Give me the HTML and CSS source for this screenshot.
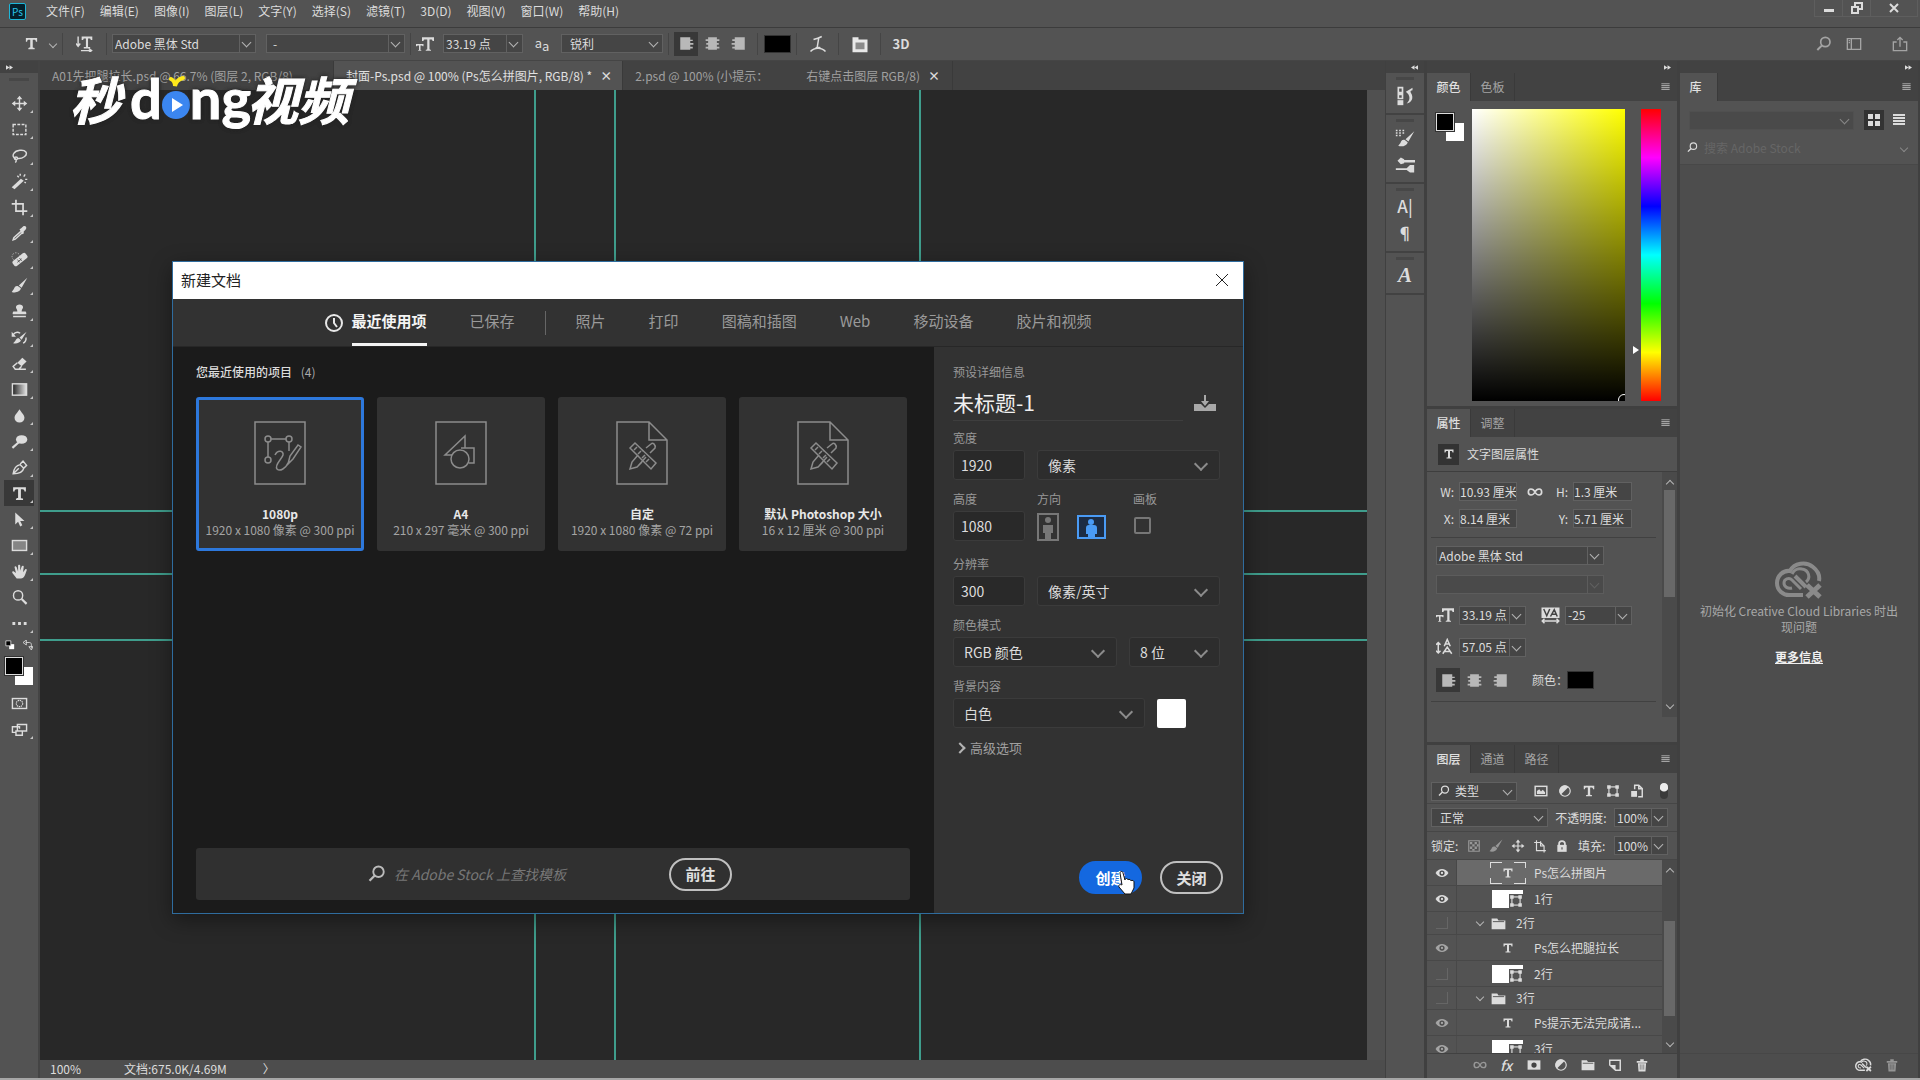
FILE: index.html
```html
<!DOCTYPE html>
<html lang="zh-CN">
<head>
    <meta charset="UTF-8">
    <meta name="viewport" content="width=device-width, initial-scale=1.0">
    <title>Photoshop</title>
    <link rel="stylesheet" href="styles.css">
</head>
<body>

    <!-- shared icons -->
    <svg class="sprite" aria-hidden="true">
        <symbol id="i-move" viewBox="0 0 24 24"><path d="M12 1l4 5h-3v5h5V8l5 4-5 4v-3h-5v5h3l-4 5-4-5h3v-5H6v3l-5-4 5-4v3h5V6H8z" fill="currentColor"/></symbol>
        <symbol id="i-marquee" viewBox="0 0 24 24"><rect x="3" y="5" width="18" height="14" fill="none" stroke="currentColor" stroke-width="2" stroke-dasharray="4 2"/></symbol>
        <symbol id="i-lasso" viewBox="0 0 24 24"><path d="M7 17c-4-2-5-5-3-8 3-5 14-6 17-2 3 5-5 10-12 9M7 14c3 0 3 4 0 4s-3-4 0-4zm0 4c1 2 0 3-1 4" fill="none" stroke="currentColor" stroke-width="2"/></symbol>
        <symbol id="i-wand" viewBox="0 0 24 24"><path d="M1 20L14 8l4 3L5 23z" fill="currentColor"/><path d="M13 1v3M20 2l-2 3M23 9h-3M21 14l-2-1M9 4l2 2" stroke="currentColor" stroke-width="2"/></symbol>
        <symbol id="i-crop" viewBox="0 0 24 24"><path d="M7 1v16h16M1 7h16v16" fill="none" stroke="currentColor" stroke-width="2.4"/></symbol>
        <symbol id="i-dropper" viewBox="0 0 24 24"><path d="M14 9L4 18l-1 3 3-1 10-9" fill="none" stroke="currentColor" stroke-width="2"/><path d="M12 6l2-1 3-3c3-2 6 1 4 4l-3 3v3l-2 1z" fill="currentColor"/></symbol>
        <symbol id="i-heal" viewBox="0 0 24 24"><rect x="1" y="8" width="23" height="9" rx="3" fill="currentColor" transform="rotate(-38 12 12)"/><path d="M9 12l3 4M12 10l3 4M9 16l6-5" stroke="#535353" stroke-width="1.3"/><circle cx="7" cy="8" r="5.5" fill="none" stroke="currentColor" stroke-dasharray="2 2"/></symbol>
        <symbol id="i-brush" viewBox="0 0 24 24"><path d="M23 1L11 12l4 3zM10 13c-4-1-5 2-6 4l-3 4c5 2 12 0 13-5z" fill="currentColor"/></symbol>
        <symbol id="i-stamp" viewBox="0 0 24 24"><path d="M9 12c0-3-2-4-2-6 0-5 10-5 10 0 0 2-2 3-2 6h5c2 0 2 4 1 4H3c-1 0-1-4 1-4zM3 18h18v2H3z" fill="currentColor"/></symbol>
        <symbol id="i-history" viewBox="0 0 24 24"><path d="M22 4L12 12l3 3zM11 13c-4 0-4 3-6 5l-2 2c4 1 10 0 11-4z" fill="currentColor"/><path d="M3 8c3-4 7-4 10-2M21 12c1 3-1 7-4 8" fill="none" stroke="currentColor" stroke-width="2"/><path d="M1 4v7h6z" fill="currentColor"/></symbol>
        <symbol id="i-eraser" viewBox="0 0 24 24"><path d="M9 11l7-7 6 5-7 7z" fill="currentColor"/><path d="M9 11l-6 5 3 4h5l4-4M6 20h15" fill="none" stroke="currentColor" stroke-width="2"/></symbol>
        <symbol id="i-gradient" viewBox="0 0 24 24"><linearGradient id="lg"><stop stop-color="#222"/><stop offset="1" stop-color="#e4e4e4"/></linearGradient><rect x="2" y="4" width="20" height="16" fill="url(#lg)" stroke="currentColor" stroke-width="2"/></symbol>
        <symbol id="i-drop" viewBox="0 0 24 24"><path d="M12 3c2 4 7 8 7 12a7 7 0 0 1-14 0c0-4 5-8 7-12z" fill="currentColor"/></symbol>
        <symbol id="i-dodge" viewBox="0 0 24 24"><ellipse cx="15" cy="9" rx="8" ry="6" fill="currentColor"/><path d="M11 13l-9 8" stroke="currentColor" stroke-width="3"/></symbol>
        <symbol id="i-pen" viewBox="0 0 24 24"><path d="M3 21c1-7 4-12 10-13l5 5c-1 5-6 8-15 8zM4 20l7-7M13 7l4-4 5 6-4 4" fill="none" stroke="currentColor" stroke-width="2"/></symbol>
        <symbol id="i-type" viewBox="0 0 24 24"><path d="M3 3h18v6h-2c0-2-1-3-3-3h-2v12c0 1 1 1 3 1v2H7v-2c2 0 3 0 3-1V6H8C6 6 5 7 5 9H3z" fill="currentColor"/></symbol>
        <symbol id="i-arrow" viewBox="0 0 24 24"><path d="M6 2v17l4-4 3 7 3-2-3-6h6z" fill="currentColor"/></symbol>
        <symbol id="i-rect" viewBox="0 0 24 24"><rect x="2" y="5" width="20" height="14" fill="#858585" stroke="currentColor" stroke-width="2"/></symbol>
        <symbol id="i-hand" viewBox="0 0 24 24"><path d="M8 22l-6-8c-1-2 1-3 2-2l3 2L5 6c0-2 2-2 3 0l2 6V4c0-2 3-2 3 0v7l2-6c1-2 3-1 3 0l-1 8 3-4c1-1 3 0 2 2-2 5-3 11-8 11z" fill="currentColor"/></symbol>
        <symbol id="i-zoom" viewBox="0 0 24 24"><circle cx="10" cy="9" r="6.5" fill="none" stroke="currentColor" stroke-width="2"/><path d="M15 14l7 7" stroke="currentColor" stroke-width="3"/></symbol>
        <symbol id="i-search" viewBox="0 0 24 24"><circle cx="14" cy="9" r="7" fill="none" stroke="currentColor" stroke-width="2.5"/><path d="M9 14l-7 7" stroke="currentColor" stroke-width="3"/></symbol>
        <symbol id="i-dots" viewBox="0 0 24 24"><path d="M2 10h4v4H2zM10 10h4v4h-4zM18 10h4v4h-4z" fill="currentColor"/></symbol>
        <symbol id="i-mask" viewBox="0 0 24 24"><rect x="2" y="5" width="20" height="14" fill="none" stroke="currentColor" stroke-width="2"/><circle cx="12" cy="12" r="4.5" fill="none" stroke="currentColor" stroke-width="1.6" stroke-dasharray="2 1"/></symbol>
        <symbol id="i-screen" viewBox="0 0 24 24"><path d="M8 16H2V8h10v3M9 5h13v9H9zM7 14h9v6H7z" fill="none" stroke="currentColor" stroke-width="2"/></symbol>
        <symbol id="i-left" viewBox="0 0 24 24"><path d="M2 2h16v4h4v2h-4v3h5v3h-5v3h4v3h-4v2H2z" fill="currentColor"/></symbol>
        <symbol id="i-center" viewBox="0 0 24 24"><path d="M5 2h14v3h4v3h-4v3h3v3h-3v3h4v3h-4v2H5v-2H1v-3h4v-3H2v-3h3V8H1V5h4z" fill="currentColor"/></symbol>
        <symbol id="i-right" viewBox="0 0 24 24"><path d="M6 2h16v20H6v-2H2v-3h4v-3H1v-3h5V8H2V5h4z" fill="currentColor"/></symbol>
        <symbol id="i-size" viewBox="0 0 24 24"><path d="M8 3h16v5h-2c0-2-1-2-2-2h-2v13l2 1v1h-7v-1l2-1V6h-3c-1 0-2 0-2 2H8zM0 12h10v3H9l-1-1H6v6h1v1H3v-1h1v-6H2l-1 1H0z" fill="currentColor"/></symbol>
        <symbol id="i-leading" viewBox="0 0 24 24"><path d="M11 11l4-9 4 9M12 8h6M9 21l6-9 6 9M11 18h8M3 6v13M0 9l3-3 3 3M0 17l3 3 3-3" fill="none" stroke="currentColor" stroke-width="2"/></symbol>
        <symbol id="i-tracking" viewBox="0 0 24 24"><rect y="2" width="24" height="14" fill="currentColor"/><path d="M3 4l4 9 4-9M12 14l5-9 4 9M13 11h7" fill="none" stroke="#444" stroke-width="2"/><path d="M1 20h22M4 17l-3 3 3 3M20 17l3 3-3 3" fill="none" stroke="currentColor" stroke-width="2"/></symbol>
        <symbol id="i-link" viewBox="0 0 24 24"><path d="M12 12c-3-6-10-6-10 0s7 6 10 0 10-6 10 0-7 6-10 0z" fill="none" stroke="currentColor" stroke-width="2.5"/></symbol>
        <symbol id="i-image" viewBox="0 0 24 24"><rect x="2" y="4" width="20" height="16" fill="none" stroke="currentColor" stroke-width="2.5"/><path d="M5 17v-5l4-3 3 4 3-3 4 4v3z" fill="currentColor"/></symbol>
        <symbol id="i-adjust" viewBox="0 0 24 24"><circle cx="12" cy="12" r="9" fill="none" stroke="currentColor" stroke-width="2"/><path d="M18 5A9 9 0 0 0 5 18z" fill="currentColor"/></symbol>
        <symbol id="i-shape" viewBox="0 0 24 24"><rect x="5" y="5" width="14" height="14" fill="none" stroke="currentColor" stroke-width="2"/><path d="M2 2h6v6H2zM16 2h6v6h-6zM2 16h6v6H2zM16 16h6v6h-6z" fill="currentColor"/></symbol>
        <symbol id="i-smart" viewBox="0 0 24 24"><path d="M8 9V2h7l6 6v14h-7M15 2v6h6" fill="none" stroke="currentColor" stroke-width="2.5"/><path d="M2 12h10v10H2z" fill="currentColor"/></symbol>
        <symbol id="i-pixels" viewBox="0 0 24 24"><path d="M3 3h18v18H3z" fill="none" stroke="currentColor" stroke-width="2"/><path d="M5 5h4v4H5zM13 5h4v4h-4zM9 9h4v4H9zM17 9h3v4h-3zM5 13h4v4H5zM13 13h4v4h-4zM9 17h4v3H9z" fill="currentColor"/></symbol>
        <symbol id="i-artboard" viewBox="0 0 24 24"><path d="M6 2v18h16M2 6h11l6 6v11M13 4v8h7" fill="none" stroke="currentColor" stroke-width="2"/></symbol>
        <symbol id="i-lock" viewBox="0 0 24 24"><path d="M4 10h16v12H4z" fill="currentColor"/><path d="M7 11V8c0-6 10-6 10 0v3" fill="none" stroke="currentColor" stroke-width="3"/><path d="M12 14v4" stroke="#535353" stroke-width="2"/></symbol>
        <symbol id="i-eye" viewBox="0 0 24 24"><path d="M1 12c5-9 17-9 22 0-5 9-17 9-22 0z" fill="currentColor"/><circle cx="12" cy="12" r="4.5" fill="#4a4a4a"/><circle cx="12" cy="12" r="2" fill="currentColor"/></symbol>
        <symbol id="i-folder" viewBox="0 0 24 24"><path d="M1 4h9l2 3h11v14H1z" fill="currentColor"/><path d="M3 9h18" stroke="#535353" stroke-width="1.5"/></symbol>
        <symbol id="i-addmask" viewBox="0 0 24 24"><path d="M1 4h22v16H1z" fill="currentColor"/><circle cx="12" cy="12" r="4.5" fill="#444"/></symbol>
        <symbol id="i-new" viewBox="0 0 24 24"><path d="M3 4h18v17h-8l-10-9z" fill="none" stroke="currentColor" stroke-width="2.5"/><path d="M3 12h10v9z" fill="currentColor"/></symbol>
        <symbol id="i-trash" viewBox="0 0 24 24"><path d="M3 5h18v3H3zM9 2h6v3H9zM5 9h14l-1 14H6z" fill="currentColor"/><path d="M9 11v9M12 11v9M15 11v9" stroke="#535353"/></symbol>
        <symbol id="i-menu" viewBox="0 0 24 24"><path d="M1 3h22v3H1zM1 8h22v3H1zM1 13h22v3H1zM1 18h22v3H1z" fill="currentColor"/></symbol>
        <symbol id="i-cloud" viewBox="0 0 48 38"><g fill="none" stroke="currentColor"><path d="M26 28l-9-9c-3-3-8-1-8 3s4 6 8 5M17 13c2-4 6-6 10-5 7 1 9 9 4 13" stroke-width="3"/><path d="M16 34c-8 1-14-5-14-12S8 9 15 10C19 2 31 0 38 6c5 4 7 9 6 14M14 34h14M20 15l11 11" stroke-width="4"/><path d="M32 24l13 12M45 24L32 36" stroke-width="5"/></g></symbol>
        <symbol id="i-tools-doc" viewBox="0 0 52 64"><g fill="none" stroke="#8c8c8c" stroke-width="1.5"><path d="M1 1h32l18 18v44H1zM33 1v18h18"/><path d="M14 27l5-5 21 20-5 6zM18 29l3-3M22 33l3-3M26 37l3-3M30 41l3-3"/><path d="M30 27l5-4c2-2 5 1 4 4l-5 5M30 36l-8 9M27 29l-1 1M22 34l-6 7-2 7 7-2 5-5"/></g></symbol>
        <symbol id="i-forward" viewBox="0 0 12 8"><path d="M0 0l6 4-6 4zM6 0l6 4-6 4z" fill="currentColor"/></symbol>
    </svg>

    <header class="menubar">
        <span class="ps-logo">Ps</span>
        <nav class="menu">
            <a href="#">文件(F)</a>
            <a href="#">编辑(E)</a>
            <a href="#">图像(I)</a>
            <a href="#">图层(L)</a>
            <a href="#">文字(Y)</a>
            <a href="#">选择(S)</a>
            <a href="#">滤镜(T)</a>
            <a href="#">3D(D)</a>
            <a href="#">视图(V)</a>
            <a href="#">窗口(W)</a>
            <a href="#">帮助(H)</a>
        </nav>
        <div class="window-controls">
            <button aria-label="最小化"><svg viewBox="0 0 12 12"><path d="M1 7h10v3H1z" fill="currentColor"/></svg></button>
            <button aria-label="还原"><svg viewBox="0 0 12 12"><path d="M4 4V1h7v6H7M1 5h6v6H1z" fill="none" stroke="currentColor" stroke-width="2"/></svg></button>
            <button aria-label="关闭窗口"><svg viewBox="0 0 12 12"><path d="M2 2l8 8M10 2l-8 8" stroke="currentColor" stroke-width="2"/></svg></button>
        </div>
    </header>

    <div class="options">
        <button class="opt-tool" aria-label="文字工具"><svg><use href="#i-type"/></svg><i class="chev"></i></button>
        <span class="sep"></span>
        <button class="opt-orient" aria-label="切换文本取向"><svg viewBox="0 0 24 24"><path d="M8 2h15v5h-2l-1-2h-3v12h3v2h-9v-2h3V5h-3l-1 2H8z" fill="currentColor"/><path d="M3 2v13M0 12l3 4 3-4M7 22h14M18 19l4 3-4 3" fill="none" stroke="currentColor" stroke-width="2"/></svg></button>
        <span class="sep"></span>
        <span class="select split opt-font"><select aria-label="字体"><option>Adobe 黑体 Std</option></select></span>
        <span class="select split opt-style"><select aria-label="字体样式"><option>-</option></select></span>
        <span class="sep"></span>
        <svg class="ico18"><use href="#i-size"/></svg>
        <span class="select split opt-size"><select aria-label="字号"><option>33.19 点</option></select></span>
        <span class="aa">a<sub>a</sub></span>
        <span class="select opt-alias"><select aria-label="消除锯齿"><option>锐利</option></select></span>
        <span class="sep"></span>
        <div class="align">
            <button class="on" aria-label="左对齐"><svg><use href="#i-left"/></svg></button>
            <button aria-label="居中对齐"><svg><use href="#i-center"/></svg></button>
            <button aria-label="右对齐"><svg><use href="#i-right"/></svg></button>
        </div>
        <span class="sep wide-sep"></span>
        <button class="swatch-black" aria-label="文本颜色"></button>
        <span class="sep"></span>
        <button class="opt-btn" aria-label="文字变形"><svg viewBox="0 0 24 24"><path d="M6 6c4-1 7-2 11-4M13 4l-2 12M9 17c2-1 4-1 6 0M2 22c5-6 15-6 20 0" fill="none" stroke="currentColor" stroke-width="2"/></svg></button>
        <span class="sep"></span>
        <button class="opt-btn" aria-label="字符面板"><svg viewBox="0 0 24 24"><path d="M2 3h8v3h12v17H2z" fill="#e8e8e8"/><path d="M6 10h12v9H6z" fill="#8a8a8a"/></svg></button>
        <span class="sep"></span>
        <button class="opt-3d">3D</button>
        <div class="options-right">
            <button aria-label="搜索"><svg><use href="#i-search"/></svg></button>
            <button aria-label="工作区"><svg viewBox="0 0 24 24"><path d="M2 4h20v16H2zM8 4v16M4 7h2M4 10h2" fill="none" stroke="currentColor" stroke-width="2"/></svg></button>
            <button aria-label="共享"><svg viewBox="0 0 24 24"><path d="M7 9H2v13h20V9h-5M12 16V2M8 6l4-4 4 4" fill="none" stroke="currentColor" stroke-width="2"/></svg></button>
        </div>
    </div>

    <div class="workspace">
        <aside class="tools">
            <div class="strip strip-left"><svg><use href="#i-forward"/></svg></div>
            <div class="grip"></div>
            <button aria-label="移动"><svg><use href="#i-move"/></svg></button>
            <button aria-label="选框"><svg><use href="#i-marquee"/></svg></button>
            <button aria-label="套索"><svg><use href="#i-lasso"/></svg></button>
            <button aria-label="魔棒"><svg><use href="#i-wand"/></svg></button>
            <button aria-label="裁剪"><svg><use href="#i-crop"/></svg></button>
            <button aria-label="吸管"><svg><use href="#i-dropper"/></svg></button>
            <button aria-label="修复"><svg><use href="#i-heal"/></svg></button>
            <button aria-label="画笔"><svg><use href="#i-brush"/></svg></button>
            <button aria-label="图章"><svg><use href="#i-stamp"/></svg></button>
            <button aria-label="历史记录画笔"><svg><use href="#i-history"/></svg></button>
            <button aria-label="橡皮擦"><svg><use href="#i-eraser"/></svg></button>
            <button aria-label="渐变"><svg><use href="#i-gradient"/></svg></button>
            <button aria-label="模糊"><svg><use href="#i-drop"/></svg></button>
            <button aria-label="减淡"><svg><use href="#i-dodge"/></svg></button>
            <button aria-label="钢笔"><svg><use href="#i-pen"/></svg></button>
            <button class="on" aria-label="文字"><svg><use href="#i-type"/></svg></button>
            <button aria-label="路径选择"><svg><use href="#i-arrow"/></svg></button>
            <button aria-label="矩形"><svg><use href="#i-rect"/></svg></button>
            <button aria-label="抓手"><svg><use href="#i-hand"/></svg></button>
            <button class="no-sub" aria-label="缩放"><svg><use href="#i-zoom"/></svg></button>
            <button aria-label="编辑工具栏"><svg><use href="#i-dots"/></svg></button>
            <div class="color-mini">
                <svg viewBox="0 0 12 12"><path d="M5 5h6v6H5z" fill="#fff"/><path d="M1 1h6v6H1z" fill="#000" stroke="#ddd"/></svg>
                <svg viewBox="0 0 12 12"><path d="M3 3h5c1 0 2 1 2 2v5M4 0L0 3l4 3zM7 8l3 4 2-4z" fill="none" stroke="#ddd"/></svg>
            </div>
            <div class="fgbg"><span class="bg"></span><span class="fg"></span></div>
            <button class="no-sub" aria-label="快速蒙版"><svg><use href="#i-mask"/></svg></button>
            <button aria-label="屏幕模式"><svg><use href="#i-screen"/></svg></button>
        </aside>

        <main class="document">
            <div class="doc-tabs">
                <a href="#" class="doc-tab tab-a">A01先把腿拉长.psd @ 66.7% (图层 2, RGB/8)</a>
                <a href="#" class="doc-tab active">封面-Ps.psd @ 100% (Ps怎么拼图片, RGB/8) * <b>×</b></a>
                <a href="#" class="doc-tab"><span>2.psd @ 100% (小提示：</span><span class="tab-gap">右键点击图层 RGB/8)</span> <b>×</b></a>
            </div>
            <div class="doc-body">
                <div class="canvas">
                    <span class="guide v g1"></span>
                    <span class="guide v g2"></span>
                    <span class="guide v g3"></span>
                    <span class="guide h g4"></span>
                    <span class="guide h g5"></span>
                    <span class="guide h g6"></span>
                </div>
                <div class="gutter"></div>
            </div>
            <footer class="status">
                <span class="status-zoom">100%</span>
                <span>文档:675.0K/4.69M</span>
                <span class="status-arrow">〉</span>
            </footer>
        </main>

        <aside class="dock">
            <div class="strip"><svg class="flip"><use href="#i-forward"/></svg></div>
            <div class="dock-group">
                <button aria-label="历史记录"><svg viewBox="0 0 24 24"><path d="M4 2h5v6H4zM4 10h5v5H4z" fill="none" stroke="currentColor" stroke-width="2"/><path d="M3 17h7v6H3z" fill="currentColor"/><path d="M13 7l8-5v3c-2 0-3 1-2 3 4 6 1 12-5 13 4-4 4-7 2-11z" fill="currentColor"/></svg></button>
            </div>
            <div class="dock-group">
                <button aria-label="画笔设置"><svg viewBox="0 0 24 24"><use href="#i-brush" x="3" y="3" width="21" height="21"/><path d="M2 2v9M6 2v9M10 2v6" stroke="currentColor" stroke-width="2" stroke-dasharray="2 1"/></svg></button>
                <button aria-label="画笔"><svg viewBox="0 0 24 24"><path d="M0 7h3l4-4 4 2v1h13v3H11v1l-4 1-4-4zM1 16h13l4-4h5v9h-5l-4-3H1z" fill="currentColor"/></svg></button>
            </div>
            <div class="dock-group">
                <button class="glyph" aria-label="字符">A|</button>
                <button class="glyph" aria-label="段落">¶</button>
            </div>
            <div class="dock-group">
                <button class="glyph script" aria-label="字形">A</button>
            </div>
        </aside>

        <aside class="panels">
            <div class="strip"><svg><use href="#i-forward"/></svg></div>
            <section class="panel color-panel">
                <div class="tabs">
                    <button class="tab active">颜色</button>
                    <button class="tab">色板</button>
                    <svg class="burger"><use href="#i-menu"/></svg>
                </div>
                <div class="color-body">
                    <div class="fgbg"><span class="bg"></span><span class="fg"></span></div>
                    <div class="field"><span class="field-mark"></span></div>
                    <div class="hue"><span class="hue-mark"></span></div>
                </div>
            </section>

            <section class="panel props">
                <div class="tabs">
                    <button class="tab active">属性</button>
                    <button class="tab">调整</button>
                    <svg class="burger"><use href="#i-menu"/></svg>
                </div>
                <div class="props-title"><span class="type-box"><svg><use href="#i-type"/></svg></span>文字图层属性</div>
                <div class="props-main">
                    <div class="props-body">
                        <div class="xy">
                            <label for="pw">W:</label><input id="pw" value="10.93 厘米">
                            <svg class="ico16"><use href="#i-link"/></svg>
                            <label for="ph">H:</label><input id="ph" value="1.3 厘米">
                            <label for="px">X:</label><input id="px" value="8.14 厘米">
                            <span></span>
                            <label for="py">Y:</label><input id="py" value="5.71 厘米">
                        </div>
                        <div class="type-props">
                            <span class="select split wide"><select aria-label="字体系列"><option>Adobe 黑体 Std</option></select></span>
                            <span class="select split wide off"><select aria-label="样式" disabled><option></option></select></span>
                            <div class="prow">
                                <svg class="ico18"><use href="#i-size"/></svg>
                                <span class="select split num"><select aria-label="大小"><option>33.19 点</option></select></span>
                                <svg class="ico18 tracking"><use href="#i-tracking"/></svg>
                                <span class="select split num"><select aria-label="字距"><option>-25</option></select></span>
                            </div>
                            <div class="prow">
                                <svg class="ico18"><use href="#i-leading"/></svg>
                                <span class="select split num"><select aria-label="行距"><option>57.05 点</option></select></span>
                            </div>
                            <div class="prow">
                                <div class="align">
                                    <button class="on" aria-label="左对齐"><svg><use href="#i-left"/></svg></button>
                                    <button aria-label="居中对齐"><svg><use href="#i-center"/></svg></button>
                                    <button aria-label="右对齐"><svg><use href="#i-right"/></svg></button>
                                </div>
                                <span class="color-label">颜色：</span>
                                <button class="swatch-black" aria-label="颜色"></button>
                            </div>
                        </div>
                    </div>
                    <div class="scrollbar"><i class="chev up"></i><span class="thumb"></span><i class="chev"></i></div>
                </div>
            </section>

            <section class="panel layers">
                <div class="tabs">
                    <button class="tab active">图层</button>
                    <button class="tab">通道</button>
                    <button class="tab">路径</button>
                    <svg class="burger"><use href="#i-menu"/></svg>
                </div>
                <div class="lrow filter">
                    <span class="select kind"><svg><use href="#i-search"/></svg><select aria-label="类型"><option>类型</option></select></span>
                    <div class="filter-icons">
                        <svg><use href="#i-image"/></svg>
                        <svg><use href="#i-adjust"/></svg>
                        <svg><use href="#i-type"/></svg>
                        <svg><use href="#i-shape"/></svg>
                        <svg><use href="#i-smart"/></svg>
                    </div>
                    <span class="toggle"></span>
                </div>
                <div class="lrow">
                    <span class="select blend"><select aria-label="混合模式"><option>正常</option></select></span>
                    <label for="opacity">不透明度:</label>
                    <span class="select split pct"><select id="opacity"><option>100%</option></select></span>
                </div>
                <div class="lrow">
                    <span>锁定:</span>
                    <div class="lock-icons">
                        <svg class="dim"><use href="#i-pixels"/></svg>
                        <svg class="dim"><use href="#i-brush"/></svg>
                        <svg><use href="#i-move"/></svg>
                        <svg><use href="#i-artboard"/></svg>
                        <svg><use href="#i-lock"/></svg>
                    </div>
                    <label for="fill">填充:</label>
                    <span class="select split pct"><select id="fill"><option>100%</option></select></span>
                </div>
                <div class="layer-area">
                    <ul class="layer-list">
                        <li class="selected"><span class="vis"><svg><use href="#i-eye"/></svg></span><span class="thumb-type framed"><svg><use href="#i-type"/></svg></span>Ps怎么拼图片</li>
                        <li><span class="vis"><svg><use href="#i-eye"/></svg></span><span class="thumb-shape"><svg><use href="#i-shape"/></svg></span>1行</li>
                        <li class="group"><span class="vis"><i></i></span><i class="chev"></i><svg class="ico18"><use href="#i-folder"/></svg>2行</li>
                        <li><span class="vis dim"><svg><use href="#i-eye"/></svg></span><span class="thumb-type"><svg><use href="#i-type"/></svg></span>Ps怎么把腿拉长</li>
                        <li><span class="vis"><i></i></span><span class="thumb-shape"><svg><use href="#i-shape"/></svg></span>2行</li>
                        <li class="group"><span class="vis"><i></i></span><i class="chev"></i><svg class="ico18"><use href="#i-folder"/></svg>3行</li>
                        <li><span class="vis dim"><svg><use href="#i-eye"/></svg></span><span class="thumb-type"><svg><use href="#i-type"/></svg></span>Ps提示无法完成请...</li>
                        <li><span class="vis dim"><svg><use href="#i-eye"/></svg></span><span class="thumb-shape"><svg><use href="#i-shape"/></svg></span>3行</li>
                    </ul>
                    <div class="scrollbar"><i class="chev up"></i><span class="thumb"></span><i class="chev"></i></div>
                </div>
                <div class="layer-foot">
                    <svg class="dim"><use href="#i-link"/></svg>
                    <em>fx</em>
                    <svg><use href="#i-addmask"/></svg>
                    <svg><use href="#i-adjust"/></svg>
                    <svg><use href="#i-folder"/></svg>
                    <svg><use href="#i-new"/></svg>
                    <svg><use href="#i-trash"/></svg>
                </div>
            </section>
        </aside>

        <aside class="library">
            <div class="strip"><svg><use href="#i-forward"/></svg></div>
            <div class="tabs">
                <button class="tab active">库</button>
                <svg class="burger"><use href="#i-menu"/></svg>
            </div>
            <div class="lib-top">
                <span class="select"><select aria-label="库" disabled><option></option></select></span>
                <button class="on" aria-label="网格"><svg viewBox="0 0 12 12"><path d="M0 0h5v5H0zM7 0h5v5H7zM0 7h5v5H0zM7 7h5v5H7z" fill="currentColor"/></svg></button>
                <button aria-label="列表"><svg viewBox="0 0 12 12"><path d="M0 0h12v2H0zM0 3h12v2H0zM0 6h12v2H0zM0 9h12v2H0z" fill="currentColor"/></svg></button>
            </div>
            <div class="lib-search">
                <svg><use href="#i-search"/></svg>
                <input aria-label="搜索" placeholder="搜索 Adobe Stock">
                <i class="chev"></i>
            </div>
            <div class="lib-body">
                <svg class="cloud"><use href="#i-cloud"/></svg>
                <p>初始化 Creative Cloud Libraries 时出现问题</p>
                <a href="#">更多信息</a>
            </div>
            <div class="lib-foot">
                <svg><use href="#i-cloud"/></svg>
                <svg class="dim"><use href="#i-trash"/></svg>
            </div>
        </aside>
    </div>

    <!-- new document window -->
    <div class="dialog" role="dialog" aria-labelledby="dlg-title">
        <div class="dlg-title">
            <span id="dlg-title">新建文档</span>
            <button aria-label="关闭对话框"><svg viewBox="0 0 14 14"><path d="M1 1l12 12M13 1L1 13" stroke="#222"/></svg></button>
        </div>
        <nav class="dlg-tabs">
            <svg viewBox="0 0 18 18"><circle cx="9" cy="9" r="8" fill="none" stroke="#e8e8e8" stroke-width="2"/><path d="M9 4v5l3 4" fill="none" stroke="#e8e8e8" stroke-width="2"/></svg>
            <a href="#" class="active">最近使用项</a>
            <a href="#">已保存</a>
            <span class="dlg-sep"></span>
            <a href="#">照片</a>
            <a href="#">打印</a>
            <a href="#">图稿和插图</a>
            <a href="#">Web</a>
            <a href="#">移动设备</a>
            <a href="#">胶片和视频</a>
        </nav>
        <div class="dlg-body">
            <div class="recent">
                <h2>您最近使用的项目 <span>(4)</span></h2>
                <div class="cards">
                    <button class="card active">
                        <svg viewBox="0 0 52 64"><g fill="none" stroke="#8c8c8c" stroke-width="1.5"><rect x="1" y="1" width="50" height="62"/><circle cx="14" cy="18" r="3"/><circle cx="35" cy="18" r="3"/><circle cx="14" cy="39" r="3"/><path d="M17 18h15M14 21v15M35 21v9M21 34c3-6 9-4 8 0s-9 10-6 14c3 3 9-1 11-6M34 43l2-8 8-11 3 2-8 12z"/></g></svg>
                        <strong>1080p</strong>
                        <span>1920 x 1080 像素 @ 300 ppi</span>
                    </button>
                    <button class="card">
                        <svg viewBox="0 0 52 64"><g fill="none" stroke="#8c8c8c" stroke-width="1.5"><rect x="1" y="1" width="50" height="62"/><path d="M17 34h-7l20-19v12M26 27h13v15h-5"/><circle cx="25" cy="38" r="9"/></g></svg>
                        <strong>A4</strong>
                        <span>210 x 297 毫米 @ 300 ppi</span>
                    </button>
                    <button class="card">
                        <svg><use href="#i-tools-doc"/></svg>
                        <strong>自定</strong>
                        <span>1920 x 1080 像素 @ 72 ppi</span>
                    </button>
                    <button class="card">
                        <svg><use href="#i-tools-doc"/></svg>
                        <strong>默认 Photoshop 大小</strong>
                        <span>16 x 12 厘米 @ 300 ppi</span>
                    </button>
                </div>
                <div class="stock">
                    <svg><use href="#i-search"/></svg>
                    <input aria-label="模板搜索" placeholder="在 Adobe Stock 上查找模板">
                    <button class="pill">前往</button>
                </div>
            </div>
            <form class="details">
                <div class="form-main">
                    <label for="doc-name">预设详细信息</label>
                    <div class="name-row">
                        <input id="doc-name" value="未标题-1">
                        <button type="button" aria-label="存储预设"><svg viewBox="0 0 22 16"><path d="M0 9h7l4 4 4-4h7v7H0z" fill="#a8a8a8"/><path d="M10 0h2v6h3l-4 5-4-5h3z" fill="#a8a8a8"/></svg></button>
                    </div>
                    <div class="frow">
                        <div class="fcol size"><label for="w">宽度</label><input id="w" value="1920"></div>
                        <div class="fcol grow"><label for="unit" class="blank">&nbsp;</label><span class="select big"><select id="unit"><option>像素</option></select></span></div>
                    </div>
                    <div class="frow tall">
                        <div class="fcol size"><label for="h">高度</label><input id="h" value="1080"></div>
                        <div class="fcol orient">
                            <label>方向</label>
                            <div class="orient-btns">
                                <button type="button" aria-label="纵向"><svg width="22" height="28" viewBox="0 0 22 28"><rect x="1" y="1" width="20" height="26" fill="none" stroke="#777" stroke-width="2"/><circle cx="11" cy="7" r="3" fill="#777"/><path d="M6 12h10v8h-2v6H8v-6H6z" fill="#777"/></svg></button>
                                <button type="button" aria-label="横向"><svg width="29" height="24" viewBox="0 0 29 24"><rect x="1" y="1" width="27" height="22" fill="#1c2c44" stroke="#4a9bf5" stroke-width="2"/><circle cx="14" cy="7" r="3" fill="#4a9bf5"/><path d="M9 13c0-2 1-3 3-3h5c2 0 3 1 3 3v6h-2v4h-7v-4H9z" fill="#4a9bf5"/></svg></button>
                            </div>
                        </div>
                        <div class="fcol"><label for="ab">画板</label><input type="checkbox" id="ab"></div>
                    </div>
                    <div class="frow">
                        <div class="fcol size"><label for="res">分辨率</label><input id="res" value="300"></div>
                        <div class="fcol grow"><label for="resu" class="blank">&nbsp;</label><span class="select big"><select id="resu"><option>像素/英寸</option></select></span></div>
                    </div>
                    <div class="frow">
                        <div class="fcol mode"><label for="mode">颜色模式</label><span class="select big"><select id="mode"><option>RGB 颜色</option></select></span></div>
                        <div class="fcol grow"><label for="bits" class="blank">&nbsp;</label><span class="select big"><select id="bits"><option>8 位</option></select></span></div>
                    </div>
                    <div class="frow">
                        <div class="fcol back"><label for="back">背景内容</label><span class="select big"><select id="back"><option>白色</option></select></span></div>
                        <button type="button" class="swatch-white" aria-label="背景颜色"></button>
                    </div>
                    <button type="button" class="advanced"><i class="chev next"></i>高级选项</button>
                </div>
                <div class="dlg-foot">
                    <button type="button" class="pill primary">创建</button>
                    <button type="button" class="pill">关闭</button>
                    <svg class="cursor" viewBox="0 0 18 24"><path d="M5 14L3 2c0-2 3-2 3 0l2 7c0-2 3-2 3 0 0-1 3-1 3 1 0-1 3-1 3 1v6l-3 6H8l-6-7c-1-2 1-3 3-2z" fill="#fff" stroke="#111"/></svg>
                </div>
            </form>
        </div>
    </div>

    <!-- channel watermark -->
    <div class="watermark">
        <span class="cjk first">秒</span><span>d</span><svg viewBox="0 0 28 44"><path d="M9 3c2 1 4 4 4 7 1-5 4-7 8-8" fill="none" stroke="#ffe81a" stroke-width="4" stroke-linecap="round"/><circle cx="14" cy="29" r="14" fill="#3b86f0"/><path d="M10 22l11 7-11 7z" fill="#fff"/></svg><span>ng</span><span class="cjk">视频</span>
    </div>

</body>
</html>
```

FILE: styles.css
```css
* {
    box-sizing: border-box;
}
body {
    margin: 0;
    height: 100vh;
    display: flex;
    flex-direction: column;
    overflow: hidden;
    position: relative;
    background: #535353;
    border-bottom: 2px solid #a6a6a6;
    color: #dcdcdc;
    font-family: "Noto Sans CJK SC", "Noto Sans", sans-serif;
    font-size: 12px;
    line-height: 16px;
}
button, input, select {
    font: inherit;
    color: inherit;
    margin: 0;
    padding: 0;
    border: 0;
    background: none;
    border-radius: 0;
}
button {
    display: flex;
    align-items: center;
    justify-content: center;
}
a {
    color: inherit;
    text-decoration: none;
}
svg {
    display: block;
    flex: none;
    width: 14px;
    height: 14px;
}
.sprite {
    position: absolute;
    width: 0;
    height: 0;
}
.ico16 {
    width: 16px;
    height: 16px;
}
.ico18 {
    width: 18px;
    height: 18px;
}
.dim {
    opacity: 0.5;
}
.chev {
    display: block;
    flex: none;
    width: 6px;
    height: 6px;
    border: solid #b4b4b4;
    border-width: 0 1px 1px 0;
    transform: rotate(45deg);
}
.chev.up {
    transform: rotate(225deg);
}

/* drop-downs */
.select {
    position: relative;
    display: flex;
    align-items: center;
    flex: none;
    height: 19px;
    background: #454545;
    border: 1px solid #616161;
}
.select select {
    appearance: none;
    width: 100%;
    height: 100%;
    padding: 0 18px 0 2px;
    opacity: 1;
}
.select::after {
    content: '';
    position: absolute;
    right: 5px;
    top: 4px;
    width: 6px;
    height: 6px;
    border: solid #b4b4b4;
    border-width: 0 1px 1px 0;
    transform: rotate(45deg);
    pointer-events: none;
}
.select.split::before {
    content: '';
    position: absolute;
    right: 15px;
    top: 0;
    bottom: 0;
    border-left: 1px solid #616161;
}
.select.off {
    background: #4a4a4a;
    border-color: #5c5c5c;
}
.select.off::after {
    border-color: #606060;
}
.select.off::before {
    border-color: #5c5c5c;
}

/* menu bar */
.menubar {
    display: flex;
    align-items: center;
    height: 27px;
    flex: none;
    padding: 0 2px 5px 9px;
}
.ps-logo {
    width: 17px;
    height: 17px;
    border: 1px solid #1fb6d8;
    background: #04202c;
    color: #2ac4e8;
    font-size: 10px;
    line-height: 15px;
    text-align: center;
    border-radius: 2px;
}
.menu {
    display: flex;
    gap: 15px;
    margin-left: 20px;
}
.window-controls {
    display: flex;
    margin-left: auto;
    align-self: flex-start;
    border: 1px solid #5e5e5e;
    border-top: 0;
}
.window-controls button {
    width: 28px;
    height: 16px;
    border-right: 1px solid #5e5e5e;
}
.window-controls button:last-child {
    width: 46px;
    border-right: 0;
}
.window-controls svg {
    width: 12px;
    height: 12px;
}

/* options bar */
.options {
    display: flex;
    align-items: center;
    height: 34px;
    flex: none;
    padding: 0 12px 1px 24px;
    border-top: 1px solid #3c3c3c;
    border-bottom: 1px solid #454545;
}
.sep {
    height: 22px;
    margin: 0 5px;
    border-left: 1px solid #454545;
}
.wide-sep {
    margin: 0 6px 0 7px;
}
.opt-tool {
    gap: 11px;
    width: 33px;
    justify-content: flex-start;
}
.opt-tool svg {
    width: 15px;
    height: 17px;
}
.opt-orient {
    width: 33px;
}
.opt-orient svg {
    width: 17px;
    height: 17px;
}
.opt-font {
    width: 144px;
    margin-right: 10px;
}
.opt-style {
    width: 139px;
}
.opt-style select {
    padding-left: 6px;
}
.opt-size {
    width: 80px;
    margin-left: 9px;
}
.aa {
    width: 38px;
    text-align: center;
    font-size: 13px;
    line-height: 13px;
}
.aa sub {
    font-size: 13px;
    line-height: 10px;
    vertical-align: -3px;
}
.opt-alias {
    width: 102px;
}
.opt-alias select {
    padding-left: 8px;
}
.align {
    display: flex;
    gap: 2px;
    color: #b8b8b8;
}
.align button {
    width: 24px;
    height: 24px;
}
.align button.on {
    background: #383838;
}
.align svg {
    width: 15px;
    height: 15px;
}
.swatch-black {
    width: 27px;
    height: 18px;
    background: #000;
    border: 1px solid #333;
}
.opt-btn {
    width: 31px;
}
.opt-btn svg {
    width: 18px;
    height: 18px;
}
.opt-3d {
    width: 30px;
    font-size: 13px;
    font-weight: 700;
}
.options-right {
    display: flex;
    gap: 14px;
    margin-left: auto;
    color: #a4a4a4;
}
.options-right svg {
    width: 16px;
    height: 16px;
}
.options-right button:last-child {
    margin-left: 16px;
}

/* workspace columns */
.workspace {
    flex: 1;
    min-height: 0;
    display: flex;
    background: #404040;
    padding-right: 2px;
}
.strip {
    display: flex;
    align-items: center;
    justify-content: flex-end;
    flex: none;
    height: 12px;
    padding: 0 6px;
    background: #424242;
}
.strip svg {
    width: 7px;
    height: 5px;
}
.strip .flip {
    transform: scaleX(-1);
}
.strip-left {
    justify-content: flex-start;
    width: 100%;
}
.tools {
    display: flex;
    flex-direction: column;
    align-items: center;
    flex: none;
    width: 40px;
    background: #535353;
    border-right: 2px solid #444;
}
.grip {
    width: 20px;
    height: 17px;
    background: linear-gradient(#474747, #474747) center 5px / 20px 3px no-repeat;
}
.tools button {
    position: relative;
    width: 30px;
    height: 26px;
    flex: none;
}
.tools button svg {
    width: 17px;
    height: 17px;
}
.tools button.on {
    background: #383838;
}
.tools button::after {
    content: '';
    position: absolute;
    right: 1px;
    bottom: 3px;
    border: solid transparent;
    border-width: 3px 0 0 3px;
    border-bottom: 3px solid #c4c4c4;
    border-top: 0;
}
.tools button.no-sub::after {
    display: none;
}
.color-mini {
    display: flex;
    gap: 8px;
    margin: 4px 0 6px;
}
.color-mini svg {
    width: 10px;
    height: 10px;
}
.fgbg {
    position: relative;
    flex: none;
    width: 30px;
    height: 29px;
}
.tools .fgbg {
    margin-bottom: 5px;
}
.fgbg span {
    position: absolute;
    width: 18px;
    height: 18px;
}
.fgbg .fg {
    left: 1px;
    top: 1px;
    background: #000;
    border: 1px solid #ddd;
    outline: 1px solid #333;
}
.fgbg .bg {
    right: 1px;
    bottom: 0;
    background: #fff;
}

/* document */
.document {
    flex: 1;
    min-width: 0;
    display: flex;
    flex-direction: column;
    background: #535353;
}
.doc-tabs {
    display: flex;
    flex: none;
    height: 29px;
    background: #424242;
    overflow: hidden;
}
.doc-tab {
    display: flex;
    align-items: center;
    gap: 8px;
    padding: 0 12px;
    color: #a0a0a0;
    border-right: 1px solid #3a3a3a;
    white-space: nowrap;
}
.doc-tab.active {
    padding: 0 10px 0 12px;
    background: #535353;
    color: #e0e0e0;
}
.doc-tab b {
    font-size: 12px;
    color: #dcdcdc;
}
.tab-a {
    width: 294px;
    overflow: hidden;
}
.tab-gap {
    margin-left: 30px;
}
.doc-body {
    flex: 1;
    min-height: 0;
    display: flex;
}
.canvas {
    position: relative;
    flex: 1;
    background: #282828;
    overflow: hidden;
}
.gutter {
    width: 18px;
    background: #505050;
}
.guide {
    position: absolute;
    background: #3f9d8c;
}
.guide.v {
    top: 0;
    bottom: 0;
    width: 2px;
}
.guide.h {
    left: 0;
    right: 0;
    height: 2px;
}
.g1 { left: 494px; }
.g2 { left: 574px; }
.g3 { left: 879px; }
.g4 { top: 420px; }
.g5 { top: 483px; }
.g6 { top: 549px; }
.status {
    display: flex;
    align-items: center;
    flex: none;
    height: 18px;
    background: #4d4d4d;
}
.status-zoom {
    width: 84px;
    padding-left: 10px;
}
.status-arrow {
    margin-left: 36px;
}

/* collapsed dock */
.dock {
    flex: none;
    width: 38px;
    margin: 0 3px 0 1px;
    background: #535353;
}
.dock-group {
    padding: 9px 0 4px;
    border-bottom: 2px solid #424242;
    background: linear-gradient(#474747, #474747) center 4px / 18px 3px no-repeat;
}
.dock-group button {
    width: 100%;
    height: 27px;
}
.dock-group svg {
    width: 20px;
    height: 20px;
}
.dock-group .glyph {
    padding-bottom: 2px;
    font-size: 17px;
    font-weight: 500;
}
.dock-group .script {
    font-family: "Liberation Serif", serif;
    font-style: italic;
    font-weight: 700;
    font-size: 21px;
}

/* panels */
.panels {
    flex: none;
    width: 250px;
    display: flex;
    flex-direction: column;
    margin-right: 3px;
    gap: 3px;
}
.panels .strip {
    margin-bottom: -3px;
}
.panel {
    background: #535353;
    height: 333px;
    flex: none;
    display: flex;
    flex-direction: column;
}
.tabs {
    display: flex;
    flex: none;
    height: 28px;
    background: #424242;
}
.tab {
    width: 44px;
    color: #a4a4a4;
    border-right: 1px solid #3a3a3a;
}
.tab.active {
    background: #535353;
    color: #e0e0e0;
    font-weight: 500;
}
.burger {
    width: 11px;
    height: 9px;
    margin: 9px 6px 0 auto;
    color: #a4a4a4;
}
.color-body {
    flex: 1;
    display: flex;
    padding: 8px 16px 5px 8px;
}
.color-body .fgbg {
    margin-top: 3px;
}
.field {
    position: relative;
    flex: 1;
    margin: 0 16px 0 7px;
    overflow: hidden;
    background: linear-gradient(to top, #000, transparent), linear-gradient(to right, #fff, #ffff00);
}
.field-mark {
    position: absolute;
    right: -5px;
    bottom: -5px;
    width: 12px;
    height: 12px;
    border: 1px solid #fff;
    border-radius: 50%;
}
.hue {
    position: relative;
    width: 20px;
    background: linear-gradient(#f00, #f0f, #00f, #0ff, #0f0, #ff0, #f00);
}
.hue-mark {
    position: absolute;
    left: -8px;
    top: 237px;
    border: solid transparent;
    border-width: 4px 0 4px 6px;
    border-left-color: #fff;
}
.props-title {
    display: flex;
    align-items: center;
    gap: 8px;
    height: 35px;
    flex: none;
    padding-left: 11px;
    border-bottom: 1px solid #3e3e3e;
}
.type-box {
    display: flex;
    align-items: center;
    justify-content: center;
    width: 21px;
    height: 21px;
    background: #333;
}
.type-box svg {
    width: 12px;
    height: 12px;
}
.props-main {
    display: flex;
    height: 245px;
}
.props-body {
    flex: 1;
    padding: 0 6px 0 4px;
}
.xy {
    display: grid;
    grid-template-columns: 23px 58px 26px 15px 59px;
    column-gap: 5px;
    row-gap: 8px;
    align-items: center;
    padding: 10px 0 9px;
    border-bottom: 1px solid #414141;
}
.xy label {
    text-align: right;
}
.xy svg {
    justify-self: center;
}
.xy input {
    width: 100%;
    height: 19px;
    background: #454545;
    border: 1px solid #616161;
    white-space: nowrap;
}
.type-props {
    display: flex;
    flex-direction: column;
    padding: 8px 0 9px 5px;
    gap: 10px;
    border-bottom: 1px solid #414141;
}
.wide {
    width: 168px;
}
.prow {
    display: flex;
    align-items: center;
    min-height: 22px;
}
.prow .num {
    width: 67px;
    margin-left: 5px;
}
.prow .tracking {
    margin-left: 15px;
    width: 19px;
}
.color-label {
    margin-left: 20px;
    width: 35px;
    white-space: nowrap;
}
.scrollbar {
    display: flex;
    flex-direction: column;
    align-items: center;
    width: 15px;
    padding: 9px 0;
    background: #4a4a4a;
}
.scrollbar .thumb {
    width: 11px;
    height: 107px;
    margin: 3px 0 auto;
    background: #686868;
}

/* layers */
.layers {
    flex: 1;
    min-height: 0;
}
.lrow {
    display: flex;
    align-items: center;
    justify-content: space-between;
    flex: none;
    height: 28px;
    padding: 0 9px 0 4px;
    border-bottom: 1px solid #464646;
}
.lrow.filter {
    height: 31px;
    padding-top: 6px;
}
.kind {
    width: 86px;
    padding-left: 6px;
}
.kind svg {
    width: 12px;
    height: 12px;
}
.kind select {
    padding-left: 5px;
}
.blend {
    width: 117px;
}
.blend select {
    padding-left: 8px;
}
.pct {
    width: 54px;
}
.filter-icons, .lock-icons {
    display: flex;
    gap: 10px;
}
.lock-icons {
    gap: 8px;
}
.toggle {
    width: 8px;
    height: 16px;
    border-radius: 4px;
    background: radial-gradient(circle at 4px 4px, #eee 4px, #3a3a3a 5px);
}
.layer-area {
    flex: 1;
    min-height: 0;
    display: flex;
}
.layer-list {
    flex: 1;
    margin: 0;
    padding: 0;
    list-style: none;
    overflow: hidden;
}
.layer-list li {
    display: flex;
    align-items: center;
    height: 26px;
    border-bottom: 1px solid #484848;
    white-space: nowrap;
}
.layer-list li.group {
    height: 23px;
}
.layer-list li.selected {
    background: #6a6a6a;
}
.layer-list .group > .chev {
    margin: 0 8px 3px 20px;
}
.layer-list .group > .ico18 {
    width: 15px;
    height: 15px;
    margin-right: 10px;
}
.vis {
    display: flex;
    align-items: center;
    justify-content: center;
    flex: none;
    width: 30px;
    height: 100%;
    background: #535353;
    border-right: 1px solid #484848;
}
.vis.dim {
    opacity: 0.6;
}
.vis i {
    width: 12px;
    height: 12px;
    border: solid #666;
    border-width: 0 1px 1px 0;
}
.thumb-type {
    display: flex;
    align-items: center;
    justify-content: center;
    width: 36px;
    height: 22px;
    margin: 0 8px 0 33px;
}
.thumb-type svg {
    width: 12px;
    height: 12px;
}
.framed {
    background:
        linear-gradient(#ddd, #ddd) 0 0 / 12px 1px, linear-gradient(#ddd, #ddd) 0 0 / 1px 6px,
        linear-gradient(#ddd, #ddd) 100% 0 / 12px 1px, linear-gradient(#ddd, #ddd) 100% 0 / 1px 6px,
        linear-gradient(#ddd, #ddd) 0 100% / 12px 1px, linear-gradient(#ddd, #ddd) 0 100% / 1px 6px,
        linear-gradient(#ddd, #ddd) 100% 100% / 12px 1px, linear-gradient(#ddd, #ddd) 100% 100% / 1px 6px;
    background-repeat: no-repeat;
}
.thumb-shape {
    display: flex;
    align-items: flex-end;
    justify-content: flex-end;
    width: 31px;
    height: 18px;
    margin: 0 11px 0 35px;
    background: #fff;
}
.thumb-shape svg {
    background: #535353;
}
.layer-area .thumb {
    height: 95px;
    margin: 46px 0 auto;
}
.layer-area .scrollbar {
    padding: 9px 0 7px;
}
.layer-foot {
    display: flex;
    align-items: center;
    gap: 13px;
    flex: none;
    height: 25px;
    padding: 0 0 2px 46px;
    border-top: 1px solid #414141;
}
.layer-foot em {
    width: 14px;
    font-size: 14px;
    font-weight: 500;
}

/* library */
.library {
    flex: none;
    width: 238px;
    display: flex;
    flex-direction: column;
    background: #4d4d4d;
}
.library .tab {
    width: 38px;
    padding-right: 6px;
}
.lib-top {
    display: flex;
    align-items: center;
    height: 36px;
    padding: 2px 6px 0 9px;
    background: #535353;
}
.lib-top .select {
    flex: 1;
    margin-right: 10px;
    background: #4a4a4a;
    border-color: #505050;
}
.lib-top .select::after {
    border-color: #888;
}
.lib-top button {
    width: 20px;
    height: 20px;
    margin-right: 3px;
}
.lib-top button.on {
    background: #333;
    margin-right: 5px;
}
.lib-top svg {
    width: 12px;
    height: 12px;
}
.lib-search {
    display: flex;
    align-items: center;
    gap: 6px;
    height: 28px;
    padding: 0 11px 6px 7px;
    margin-bottom: auto;
    background: #535353;
    border-bottom: 1px solid #484848;
}
.lib-search svg {
    width: 11px;
    height: 11px;
}
.lib-search input {
    flex: 1;
    min-width: 0;
}
.lib-search input::placeholder {
    color: #666;
}
.lib-search .chev {
    border-color: #888;
}
.lib-body {
    text-align: center;
    color: #a8a8a8;
    padding: 7px 17px 0;
}
.lib-body .cloud {
    width: 48px;
    height: 38px;
    margin: 0 auto 4px;
    color: #8a8a8a;
}
.lib-body p {
    margin: 0 0 14px;
}
.lib-body a {
    color: #f0f0f0;
    font-weight: 700;
    text-decoration: underline;
}
.lib-foot {
    display: flex;
    justify-content: flex-end;
    align-items: center;
    gap: 13px;
    height: 25px;
    margin-top: auto;
    padding: 0 19px 2px 0;
    border-top: 1px solid #474747;
}
.lib-foot svg:first-child {
    width: 17px;
}

/* new document dialog */
.dialog {
    position: absolute;
    left: 172px;
    top: 261px;
    width: 1072px;
    height: 653px;
    display: flex;
    flex-direction: column;
    border: 1px solid #2f6c9e;
    background: #323232;
    box-shadow: 0 6px 20px rgba(0, 0, 0, 0.4);
}
.dlg-title {
    display: flex;
    align-items: center;
    justify-content: space-between;
    height: 37px;
    flex: none;
    padding: 0 14px 2px 8px;
    background: #fff;
    color: #222;
    font-size: 15px;
}
.dlg-tabs {
    display: flex;
    align-items: center;
    justify-content: center;
    gap: 43px;
    height: 48px;
    flex: none;
    border-bottom: 1px solid #272727;
    font-size: 15px;
    color: #9a9a9a;
}
.dlg-tabs svg {
    width: 18px;
    height: 18px;
    margin-right: -34px;
}
.dlg-tabs a {
    line-height: 43px;
    height: 47px;
}
.dlg-tabs .active {
    color: #f4f4f4;
    font-weight: 700;
    border-bottom: 3px solid #f4f4f4;
}
.dlg-sep {
    height: 24px;
    margin: 0 -13px;
    border-left: 1px solid #666;
}
.dlg-body {
    flex: 1;
    display: flex;
    min-height: 0;
}
.recent {
    flex: 1;
    display: flex;
    flex-direction: column;
    padding: 16px 24px 13px 23px;
    background: #1b1b1b;
}
.recent h2 {
    margin: 0 0 16px;
    font-size: 12px;
    line-height: 18px;
    font-weight: 500;
}
.recent h2 span {
    margin-left: 6px;
    color: #aaa;
    font-weight: 400;
}
.cards {
    display: grid;
    grid-template-columns: repeat(4, 168px);
    gap: 13px;
}
.card {
    flex-direction: column;
    height: 154px;
    padding-top: 10px;
    border: 3px solid #323232;
    border-radius: 3px;
    background: #323232;
    color: #a4a4a4;
    white-space: nowrap;
}
.card.active {
    border-color: #2d78dc;
}
.card svg {
    width: 52px;
    height: 64px;
    margin-bottom: 21px;
}
.card strong {
    color: #e8e8e8;
}
.stock {
    display: flex;
    align-items: center;
    height: 52px;
    margin-top: auto;
    padding-left: 172px;
    border-radius: 3px;
    background: #303030;
}
.stock svg {
    width: 18px;
    height: 18px;
    color: #bbb;
}
.stock input {
    width: 268px;
    margin: 0 7px 0 8px;
    font-size: 14px;
    font-style: italic;
}
.stock input::placeholder {
    color: #777;
}
.pill {
    width: 63px;
    height: 33px;
    border: 2px solid #c0c0c0;
    border-radius: 17px;
    color: #e0e0e0;
    font-size: 15px;
    font-weight: 700;
}
.pill.primary {
    background: #1468e0;
    border-color: #1468e0;
    color: #fff;
}

/* dialog form */
.details {
    width: 309px;
    display: flex;
    flex-direction: column;
    justify-content: space-between;
    padding: 16px 20px 19px 19px;
    background: #323232;
}
.form-main {
    padding-right: 3px;
}
.details label {
    display: block;
    height: 18px;
    margin-bottom: 3px;
    line-height: 18px;
    color: #989898;
}
.name-row {
    display: flex;
    align-items: center;
    gap: 11px;
    margin-bottom: 8px;
}
.name-row input {
    flex: 1;
    min-width: 0;
    height: 37px;
    font-size: 21px;
    color: #f0f0f0;
    border-bottom: 1px solid #3e3e3e;
}
.name-row button {
    margin-right: 4px;
}
.name-row svg {
    width: 22px;
    height: 16px;
}
.frow {
    display: flex;
    align-items: flex-end;
    gap: 12px;
    height: 51px;
    margin-bottom: 10px;
}
.frow.tall {
    height: 55px;
    align-items: flex-start;
}
.size {
    width: 72px;
}
.grow {
    flex: 1;
}
.orient {
    width: 84px;
}
.mode {
    width: 164px;
}
.back {
    width: 192px;
}
.size input {
    width: 100%;
    height: 30px;
    padding-left: 7px;
    font-size: 14px;
    background: #292929;
    border: 1px solid #3b3b3b;
    border-radius: 3px;
}
.select.big {
    height: 30px;
    font-size: 14px;
    background: #2d2d2d;
    border-color: #3b3b3b;
    border-radius: 3px;
}
.select.big select {
    padding-left: 10px;
}
.select.big::after {
    right: 13px;
    top: 8px;
    width: 8px;
    height: 8px;
    border-width: 0 2px 2px 0;
    border-color: #8c8c8c;
}
.orient-btns {
    display: flex;
    align-items: center;
    gap: 18px;
    height: 32px;
}
.orient-btns svg {
    width: auto;
    height: auto;
}
.fcol input[type="checkbox"] {
    appearance: none;
    display: block;
    width: 17px;
    height: 17px;
    margin: 9px 0 0 1px;
    border: 2px solid #777;
    border-radius: 2px;
}
.swatch-white {
    width: 29px;
    height: 29px;
    background: #fff;
    border-radius: 2px;
}
.advanced {
    gap: 6px;
    padding-left: 3px;
    height: 20px;
    font-size: 13px;
    color: #a0a0a0;
}
.chev.next {
    width: 8px;
    height: 8px;
    border-width: 0 2px 2px 0;
    transform: rotate(-45deg);
}
.dlg-foot {
    position: relative;
    display: flex;
    justify-content: flex-end;
    gap: 18px;
}
.cursor {
    position: absolute;
    right: 88px;
    top: 10px;
    width: 18px;
    height: 24px;
}

/* watermark */
.watermark {
    position: absolute;
    left: 70px;
    top: 68px;
    display: flex;
    align-items: center;
    height: 60px;
    color: #fff;
    font-family: Lato, sans-serif;
    font-size: 56px;
    font-weight: 700;
    line-height: 60px;
    text-shadow: 0 0 4px #222, 0 0 4px #222;
    -webkit-text-stroke: 1px #fff;
}
.watermark .cjk {
    margin-left: -4px;
    font-family: "Noto Sans CJK SC", sans-serif;
    font-size: 51px;
    font-style: italic;
}
.watermark .first {
    margin: 0 9px 0 0;
}
.watermark svg {
    width: 28px;
    height: 44px;
}
```
